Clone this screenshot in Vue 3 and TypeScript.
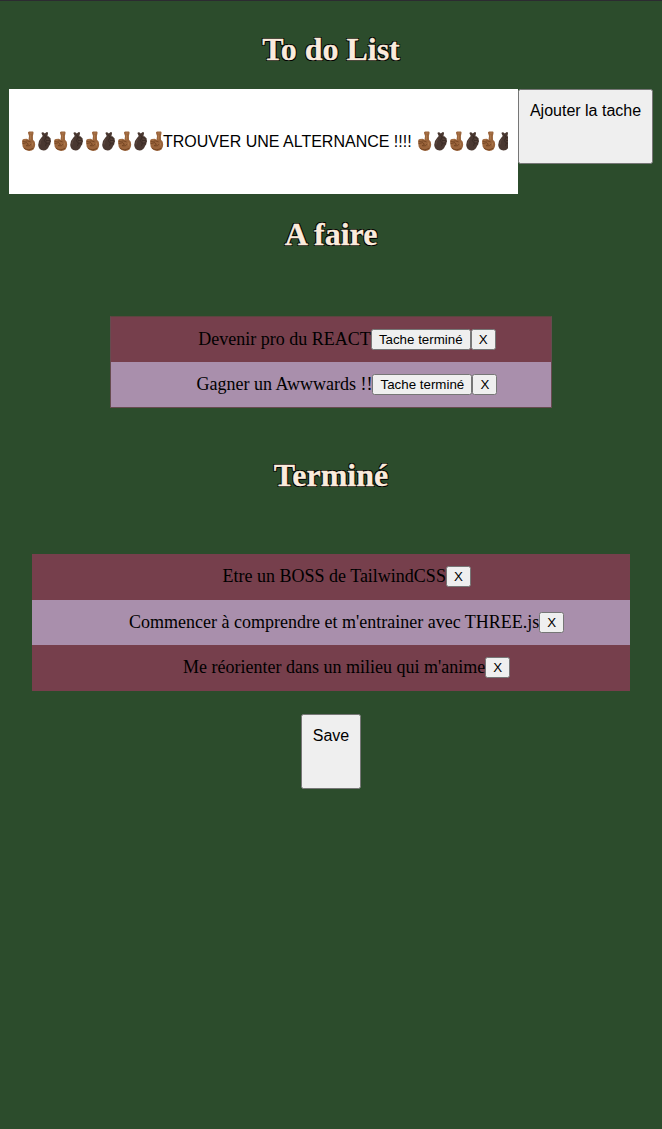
<script setup lang="ts">
import { ref } from 'vue'

interface Task {
  id: number
  label: string
}

const leading = ['a', 'b', 'a', 'b', 'a', 'b', 'a', 'b', 'a']
const trailing = ['a', 'b', 'a', 'b', 'a', 'b']

const todo = ref<Task[]>([
  { id: 1, label: 'Devenir pro du REACT' },
  { id: 2, label: 'Gagner un Awwwards !!' },
])
const done = ref<Task[]>([
  { id: 3, label: 'Etre un BOSS de TailwindCSS' },
  { id: 4, label: "Commencer à comprendre et m'entrainer avec THREE.js" },
  { id: 5, label: "Me réorienter dans un milieu qui m'anime" },
])

function finish(task: Task) {
  todo.value = todo.value.filter((t) => t.id !== task.id)
  done.value.push(task)
}
function removeTodo(id: number) {
  todo.value = todo.value.filter((t) => t.id !== id)
}
function removeDone(id: number) {
  done.value = done.value.filter((t) => t.id !== id)
}
</script>

<template>
  <svg class="defs" width="0" height="0" aria-hidden="true">
    <symbol id="hand-a" viewBox="0 0 16 22">
      <path d="M7.5 9 8 5 7 2Q6.8 .4 8.2 .4L11.8 .4Q12.8 .7 12.5 2.2L11.9 5 12 8.8Q14.4 10.2 14.2 13.7 13.8 19.9 8.2 20 3.6 19.8 1.7 15.8L1 10.6Q1 8.2 2.8 7.9L5.6 7.7Q7 7.9 7.5 9Z" fill="#9a643b" />
      <path d="M1.6 12.6 5.8 11.6 7.4 13.4 5.2 14.6M2 10.4 6.5 9.9 9.6 10.9M5.3 14.8 8.5 14.8 9.8 13.2M3 17.2Q7.6 20.4 12.4 17" fill="none" stroke="#6d3f1e" stroke-width=".8" />
      <path d="M8.8 2.2 11.2 2M9.6 3.6 9.4 8.6M3 9.2 5.4 8.8M11.4 11.6 11.6 14.6" fill="none" stroke="#b37c4e" stroke-width=".8" />
    </symbol>
    <symbol id="hand-b" viewBox="0 0 16 22">
      <path d="M4.4 2.1Q5.3 .9 6.6 1.6L7.8 2.6 9.4 1.2Q10.9 .8 11 2.2L10.4 5.2Q12.1 5 12.6 6.6 14 7.1 13.7 8.8 14.5 10.1 13.5 11.8 13.5 14 12.2 14.8 10.4 19.6 6.6 19.6 1.6 19 1.2 14 1.2 9.8 4.2 6.8L5.7 5Z" fill="#4a3831" />
      <path d="M7.4 3.8 9 6.2 7.4 9.6M9.4 6.6 12.2 7.2M9 9.4 13 9.3M9.4 12.1 12.9 12M7.4 9.8 9.4 12.1 8.5 15.1" fill="none" stroke="#33251f" stroke-width=".7" />
      <path d="M4.7 8.1Q2.9 10.6 3 13.6M9.7 8.1 11.7 8.3M10 10.8 12 10.7" fill="none" stroke="#604b43" stroke-width=".8" />
    </symbol>
  </svg>
  <main class="page">
    <h1>To do List</h1>
    <form class="entry" @submit.prevent>
      <div class="field">
        <div class="value">
          <svg v-for="(kind, i) in leading" :key="'l' + i" class="hand"><use :href="'#hand-' + kind" /></svg>
          <span class="message">TROUVER UNE ALTERNANCE !!!!</span>
          <svg v-for="(kind, i) in trailing" :key="'t' + i" class="hand"><use :href="'#hand-' + kind" /></svg>
        </div>
      </div>
      <button class="large add" type="button">Ajouter la tache</button>
    </form>
    <h1 class="todo-title">A faire</h1>
    <ul class="todo">
      <li v-for="task in todo" :key="task.id">
        <span class="label">{{ task.label }}</span>
        <button class="finish" @click="finish(task)">Tache terminé</button>
        <button class="remove" @click="removeTodo(task.id)">X</button>
      </li>
    </ul>
    <h1 class="done-title">Terminé</h1>
    <ul class="done">
      <li v-for="task in done" :key="task.id">
        <span class="label">{{ task.label }}</span>
        <button class="remove" @click="removeDone(task.id)">X</button>
      </li>
    </ul>
    <button class="large save">Save</button>
  </main>
</template>

<style>
body {
  background: #2c4c2c;
}
</style>

<style scoped>
.defs {
  display: block;
}
.page {
  box-sizing: border-box;
  min-height: 1129px;
  border-top: 1px solid #2c2b31;
  padding: 30px 9px 0;
  background: #2c4c2c;
  font-family: "Liberation Serif", "Times New Roman", serif;
  color: #000;
}
h1 {
  margin: 0;
  height: 37px;
  line-height: 37px;
  font-size: 32px;
  text-align: center;
  color: #faebdc;
  -webkit-text-stroke: 0.3px #faebdc;
  text-shadow: -1px -1px 0 #000, 1px -1px 0 #000, -1px 1px 0 #000, 1px 1px 0 #000;
}
.entry {
  display: flex;
  align-items: flex-start;
  margin-top: 21px;
}
.field {
  box-sizing: border-box;
  width: 509px;
  height: 105px;
  padding: 0 10px 0 12px;
  background: #fff;
  font: 16px/105px "Liberation Sans", Arial, sans-serif;
}
.value {
  display: flex;
  align-items: center;
  height: 105px;
  overflow: hidden;
  white-space: nowrap;
}
.hand {
  flex: none;
  width: 16px;
  height: 22px;
}
.message {
  flex: none;
  width: 252px;
  margin-left: -2px;
  margin-right: 2px;
}
button {
  box-sizing: border-box;
  flex: none;
  border: 1px solid #767676;
  border-radius: 2.5px;
  margin: 0;
  padding: 0;
  background: #efefef;
  color: #000;
  font: 13.333px/19px "Liberation Sans", Arial, sans-serif;
  text-align: center;
}
.large {
  display: block;
  height: 75px;
  padding: 10px 0 42px;
  font-size: 16px;
  line-height: 21px;
}
.add {
  width: 135px;
}
.todo-title {
  margin-top: 22px;
}
ul {
  box-sizing: border-box;
  margin: 0 auto;
  padding: 0;
  list-style: none;
  font-size: 18px;
}
.todo {
  width: 442px;
  margin-top: 63px;
  border: 1px solid #664b4f;
  border-top-color: #5c453f;
}
li {
  box-sizing: border-box;
  display: flex;
  align-items: center;
  justify-content: center;
  height: 45.5px;
  padding-left: 31.4px;
  background: #763f4c;
  white-space: nowrap;
}
.todo li {
  height: 45px;
  padding-left: 32px;
}
li:nth-child(even) {
  background: #a98fac;
}
.done {
  width: 598px;
  margin-top: 60px;
}
.finish {
  width: 100px;
  height: 21px;
}
.remove {
  width: 25px;
  height: 21px;
}
.done-title {
  margin-top: 49px;
}
.save {
  width: 60px;
  margin: 23.5px auto 0;
}
</style>
